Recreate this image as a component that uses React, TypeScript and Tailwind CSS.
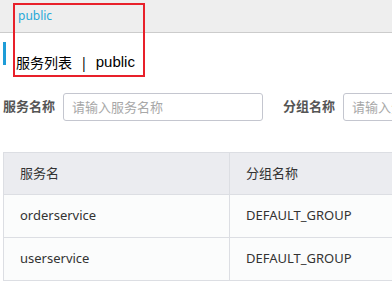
import React from "react";

const rows = [
  { name: "orderservice", group: "DEFAULT_GROUP" },
  { name: "userservice", group: "DEFAULT_GROUP" },
];

export default function App() {
  return (
    <div
      className="relative w-[392px] h-[288px] overflow-hidden bg-white text-[#333]"
      style={{ fontFamily: '"Noto Sans", "Noto Sans CJK SC", sans-serif' }}
    >
      {/* 顶部面包屑 */}
      <div className="h-[33px] bg-[#eeeeee] border-b border-[#cccccc] pl-[18px] pt-[2px]">
        <span className="text-[12px] text-[#27a8d8]">public</span>
      </div>

      {/* 标题 */}
      <div className="mt-[9px] flex items-center h-[23px] pl-[3px]">
        <div className="w-[3px] h-[23px] bg-[#1e9cd7]" />
        <h1 className="ml-[10px] mt-[18px] text-[14px] text-black font-normal flex items-center">
          服务列表
          <span className="mx-[8px]">|</span>
          <span className="text-[15px]" style={{ fontFamily: '"Liberation Sans", sans-serif' }}>
            public
          </span>
        </h1>
      </div>

      {/* 搜索栏 */}
      <div className="mt-[28px] flex items-center pl-[3px] whitespace-nowrap">
        <label className="text-[13px] font-bold text-[#555]">服务名称</label>
        <input
          className="ml-[8px] w-[200px] h-[28px] rounded-[3px] border border-[#c4c6cf] px-[8px] text-[13px] placeholder:text-[#a8a8a8] outline-none"
          placeholder="请输入服务名称"
        />
        <label className="ml-[20px] text-[13px] font-bold text-[#555]">分组名称</label>
        <input
          className="ml-[8px] w-[200px] h-[28px] rounded-[3px] border border-[#c4c6cf] px-[8px] text-[13px] placeholder:text-[#a8a8a8] outline-none"
          placeholder="请输入分组名称"
        />
      </div>

      {/* 服务列表 */}
      <div className="mt-[31px] ml-[3px] w-[520px]">
        <table className="w-full border-collapse text-[13px] text-[#333]">
          <thead>
            <tr className="bg-[#ebecf0] h-[42px]">
              <th className="w-[226px] border border-[#dcdee3] text-left font-normal pl-[16px]">
                服务名
              </th>
              <th className="border border-[#dcdee3] text-left font-normal pl-[16px]">
                分组名称
              </th>
            </tr>
          </thead>
          <tbody>
            {rows.map((r) => (
              <tr key={r.name} className="bg-[#fbfcfc] h-[43px]">
                <td className="border border-[#dcdee3] pl-[16px]">{r.name}</td>
                <td className="border border-[#dcdee3] pl-[16px]">{r.group}</td>
              </tr>
            ))}
          </tbody>
        </table>
      </div>

      {/* 标注框 */}
      <div className="absolute left-[13px] top-[3px] w-[132px] h-[74px] border-2 border-[#e8202a]" />
    </div>
  );
}
